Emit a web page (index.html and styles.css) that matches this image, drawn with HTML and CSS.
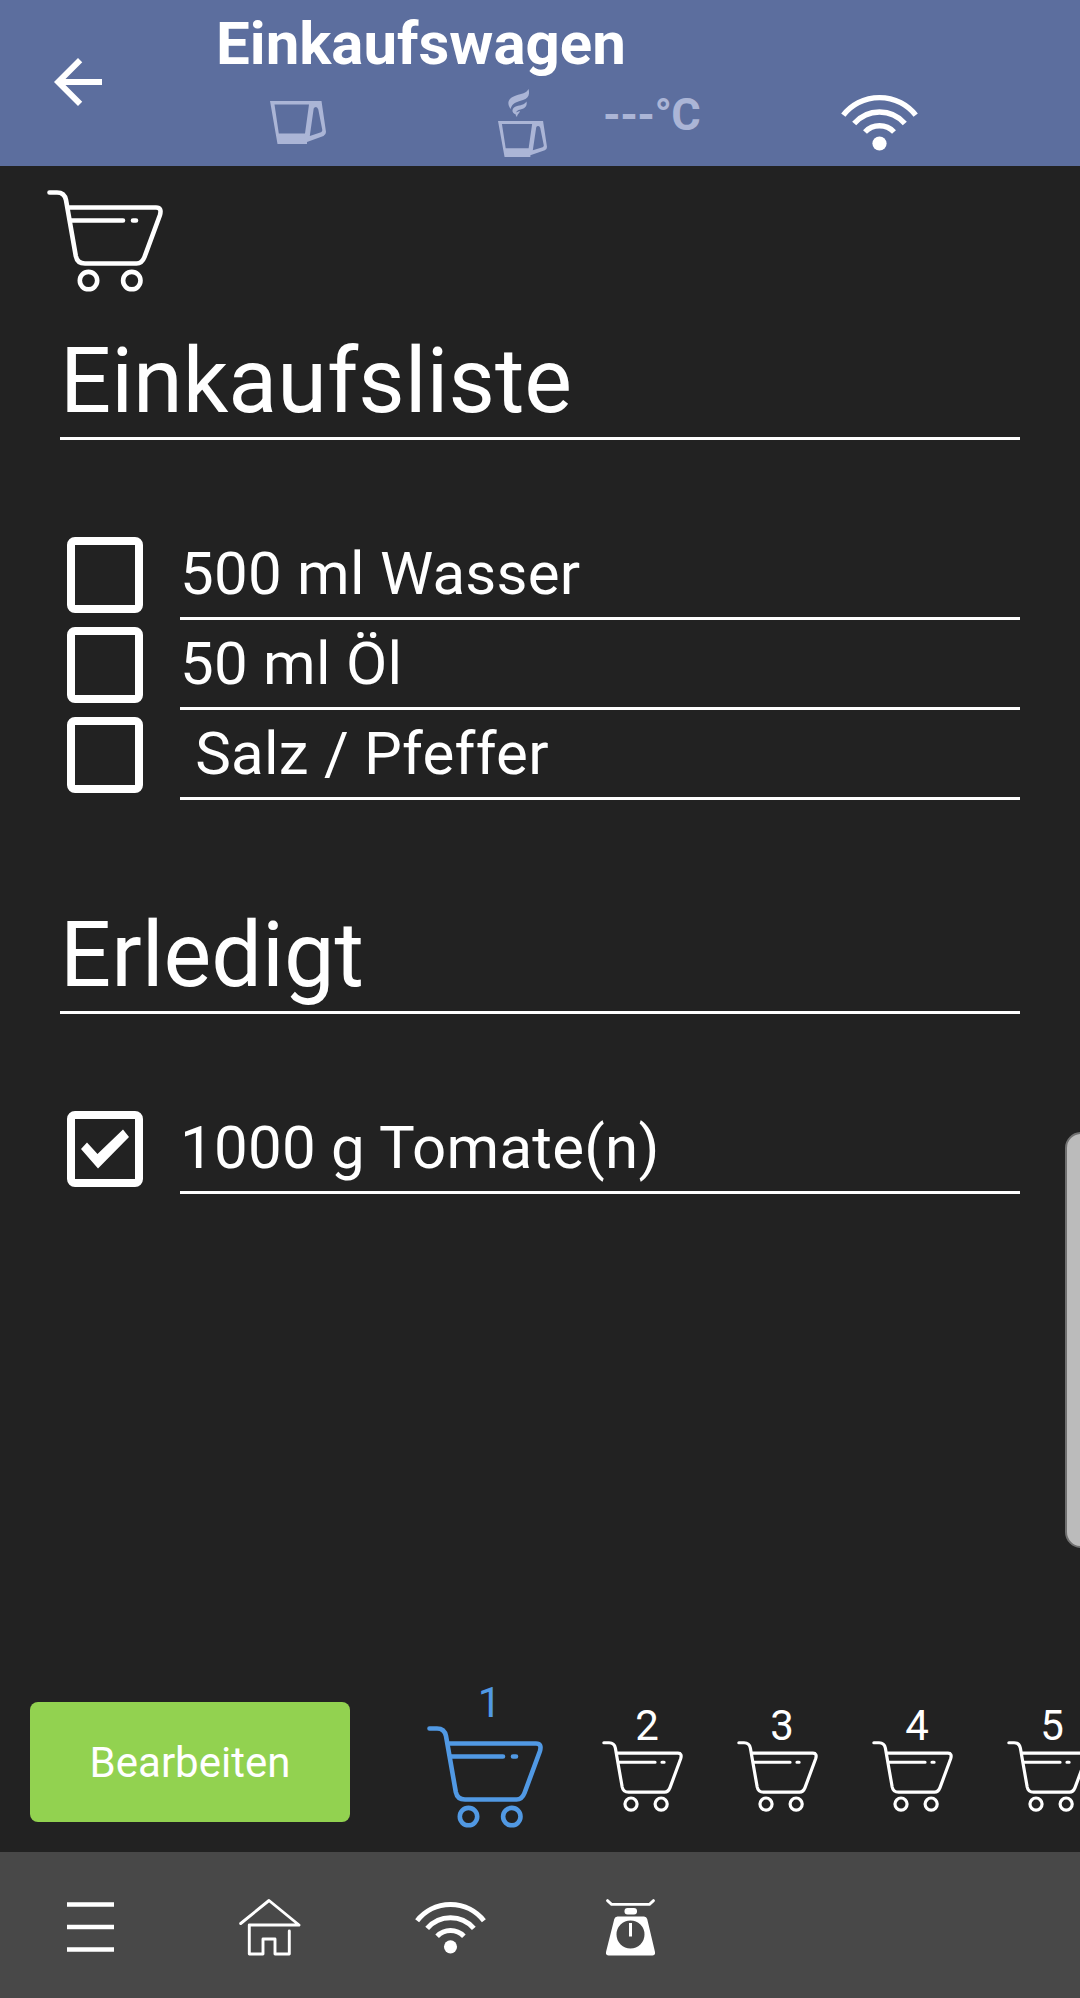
FILE: index.html
```html
<!DOCTYPE html>
<html lang="de">
<head>
  <meta charset="UTF-8" />
  <meta name="viewport" content="width=device-width, initial-scale=1.0"/>
  <title>Einkaufswagen</title>
  <link rel="stylesheet" href="styles.css">
</head>
<body>
  <!-- shared icons -->
  <svg class="sprite" aria-hidden="true">
    <symbol id="cart" viewBox="0 0 116 102">
      <g fill="none" stroke="currentColor" stroke-width="4.6" stroke-linecap="round" stroke-linejoin="round">
        <path d="M2.5 2.5H10Q17.500 2.500 19 10L28.800 66Q30.300 73.500 38 73.500H89.500Q95 73.500 97.500 67L112.800 25.500Q115.300 17.500 109 17.500H21"/>
        <path d="M24 30.500H76M86 30.500H89"/>
        <circle cx="41.500" cy="90.600" r="8.700"/>
        <circle cx="84.800" cy="90.600" r="8.700"/>
      </g>
    </symbol>
    <symbol id="wifi" viewBox="0 0 77 57">
      <g fill="none" stroke="currentColor" stroke-width="5.400">
        <path d="M2.300 21.200A46 46 0 0 1 74.700 21.200"/>
        <path d="M13.200 29.500A33.500 33.500 0 0 1 63.800 29.500"/>
        <path d="M24 38A20 20 0 0 1 53 38"/>
      </g>
      <circle cx="38.500" cy="49.500" r="7.100" fill="currentColor"/>
    </symbol>
    <symbol id="cup" viewBox="0 0 56 43" preserveAspectRatio="none">
      <path fill="currentColor" fill-rule="evenodd" d="M0 0H51.500L56 31Q56 33.500 53.500 35L37 41V43H7.500ZM4.500 3.500L8.800 32.600H35L39 3.500ZM43.700 7.500L39.800 35L51 31.300Q52.500 30.500 52.300 29L48.300 8.500Q47.500 6 46 6Q44.200 6 43.700 7.500Z"/>
    </symbol>
  </svg>

  <header class="topbar">
    <button class="back" aria-label="Zurück">
      <svg viewBox="0 0 24 24"><path fill="currentColor" d="M20 11H7.830l5.590-5.590L12 4l-8 8 8 8 1.410-1.410L7.830 13H20v-2z"/></svg>
    </button>
    <div class="topbar-main">
      <h1>Einkaufswagen</h1>
      <div class="status">
        <svg class="cup"><use href="#cup"/></svg>
        <div class="hot-cup">
          <svg class="steam" viewBox="0 0 21 28">
            <path fill="currentColor" d="M20.500 0C22 5 20.500 9.500 15 11C8 13 4.500 14 2.500 20C-1.500 14 0 9 8 6.500C14 4.500 18 4.500 20.500 0Z"/>
            <path fill="currentColor" d="M18.500 12.500C19.500 17 17 19.500 12.500 20.500C9.500 21.200 8 22 8 25.500C3 24 3 18.500 10 16.800C14 15.800 16.500 15.500 18.500 12.500ZM12 22C11.500 24.500 9.500 24.500 9 28C6.500 25 7 23 12 22Z"/>
          </svg>
          <svg class="cup small"><use href="#cup"/></svg>
        </div>
        <span class="temp">---°C</span>
        <svg class="wifi"><use href="#wifi"/></svg>
      </div>
    </div>
  </header>

  <main>
    <svg class="cart list-icon"><use href="#cart"/></svg>

    <h2>Einkaufsliste</h2>
    <ul class="items">
      <li><span class="box"></span><span class="label">500 ml Wasser</span></li>
      <li><span class="box"></span><span class="label">50 ml Öl</span></li>
      <li><span class="box"></span><span class="label">&nbsp;Salz / Pfeffer</span></li>
    </ul>

    <h2>Erledigt</h2>
    <ul class="items">
      <li>
        <span class="box"><svg viewBox="0 0 76 76"><path fill="currentColor" d="M14 38L20 31.500L30.500 43L56 18.500L62 26L31 57.500Z"/></svg></span>
        <span class="label">1000 g Tomate(n)</span>
      </li>
    </ul>
  </main>

  <div class="scroll-handle"></div>

  <section class="carts">
    <button class="edit">Bearbeiten</button>
    <div class="cart-tabs">
      <div class="tab active"><span>1</span><svg class="cart"><use href="#cart"/></svg></div>
      <div class="tab"><span>2</span><svg class="cart"><use href="#cart"/></svg></div>
      <div class="tab"><span>3</span><svg class="cart"><use href="#cart"/></svg></div>
      <div class="tab"><span>4</span><svg class="cart"><use href="#cart"/></svg></div>
      <div class="tab"><span>5</span><svg class="cart"><use href="#cart"/></svg></div>
    </div>
  </section>

  <nav class="bottombar">
    <svg class="menu-icon" viewBox="0 0 47 50"><path stroke="currentColor" stroke-width="4.600" d="M0 2.500H47M0 25H47M0 47.500H47"/></svg>
    <svg class="home-icon" viewBox="0 0 62 57"><path fill="none" stroke="currentColor" stroke-width="2.900" stroke-linecap="round" stroke-linejoin="round" d="M1.700 24.500L30 1.500L60 26H10.300V55H24V40H36V55H50.300V32"/></svg>
    <svg class="wifi"><use href="#wifi"/></svg>
    <svg class="scale-icon" viewBox="0 0 49 57">
      <path fill="none" stroke="currentColor" stroke-width="2.800" stroke-linecap="round" d="M1.500 1.600L5.500 5.300H43.500L47.500 1.600"/>
      <rect x="18.500" y="9" width="12.500" height="6.500" rx="3" fill="currentColor"/>
      <path fill="currentColor" fill-rule="evenodd" d="M11.500 17.500H38Q40.500 17.500 41.200 20L49 53Q49.500 56.500 46.500 56.500H2.500Q-.5 56.500 0 53L8.300 20Q9 17.500 11.500 17.500ZM24.500 21.500A14 14 0 1 0 24.500 49.500A14 14 0 1 0 24.500 21.500Z"/>
      <path stroke="currentColor" stroke-width="3" d="M24.500 24V37.500"/>
    </svg>
  </nav>
</body>
</html>
```

FILE: styles.css
```css
* {
  box-sizing: border-box;
}

body {
  margin: 0;
  height: 1998px;
  display: flex;
  flex-direction: column;
  position: relative;
  overflow: hidden;
  background: #222222;
  color: #fff;
  font-family: Roboto, sans-serif;
}

h1, h2, ul {
  margin: 0;
  padding: 0;
  font-weight: 400;
}

svg {
  display: block;
  flex: none;
}

button {
  border: none;
  padding: 0;
  color: #fff;
  font-family: inherit;
  cursor: pointer;
}

.sprite {
  display: none;
}

/* top bar */
.topbar {
  display: flex;
  height: 166px;
  background: #5c6e9e;
}

.back {
  width: 216px;
  padding: 0 0 2px 42px;
  background: none;
}

.back svg {
  width: 72px;
  height: 72px;
}

.topbar-main {
  flex: 1;
}

.topbar h1 {
  padding-bottom: 2px;
  font-size: 60px;
  font-weight: 700;
  line-height: 87px;
}

.status {
  display: flex;
  align-items: flex-start;
  color: #abb5d6;
}

.cup {
  width: 56px;
  height: 43px;
  margin: 12px 0 0 54px;
}

.hot-cup {
  margin-left: 172px;
}

.steam {
  width: 21px;
  height: 28px;
  margin-left: 10px;
}

.cup.small {
  width: 49px;
  height: 36px;
  margin: 4px 0 0;
}

.temp {
  width: 238px;
  margin-left: 56px;
  font-size: 45px;
  font-weight: 700;
  letter-spacing: -0.6px;
  line-height: 51px;
}

.wifi {
  width: 77px;
  height: 57px;
  color: #fff;
}

.status .wifi {
  margin-top: 5px;
}

/* list */
main {
  flex: 1;
  padding: 0 60px;
}

.cart {
  width: 116px;
  height: 102px;
}

.list-icon {
  margin: 24px 0 33px -13px;
}

h2 {
  padding-top: 2px;
  font-size: 90px;
  line-height: 110px;
  border-bottom: 3px solid #fff;
}

.items {
  list-style: none;
  padding: 90px 0 99px;
}

.items li {
  display: flex;
  align-items: center;
  height: 90px;
}

.box {
  width: 76px;
  height: 76px;
  margin: 0 37px 0 7px;
  border: 8px solid #fff;
  border-radius: 8px;
}

.box svg {
  width: 76px;
  height: 76px;
  margin: -8px;
}

.label {
  flex: 1;
  font-size: 60px;
  letter-spacing: 0.25px;
  line-height: 87px;
  border-bottom: 3px solid #fff;
}

.scroll-handle {
  position: absolute;
  top: 1132px;
  right: -17px;
  width: 32px;
  height: 416px;
  background: #bbb;
  border: 2px solid #707070;
  border-radius: 17px;
}

/* cart picker */
.carts {
  display: flex;
  align-items: flex-start;
  height: 172px;
  padding-left: 30px;
}

.edit {
  flex: none;
  width: 320px;
  height: 120px;
  margin-top: 22px;
  background: #92d250;
  border-radius: 8px;
  font-size: 42px;
}

.cart-tabs {
  display: flex;
  gap: 54px;
  margin-left: 77px;
}

.tab {
  padding-top: 23px;
  text-align: center;
  font-size: 42px;
  line-height: 46px;
}

.tab span {
  display: block;
  padding-left: 9px;
}

.tab .cart {
  width: 81px;
  height: 71px;
  margin-top: -8px;
}

.tab.active {
  padding-top: 0;
  margin-right: 5px;
  color: #5199e4;
}

.tab.active .cart {
  width: 116px;
  height: 102px;
  margin-top: 0;
}

/* bottom bar */
.bottombar {
  display: flex;
  align-items: center;
  height: 146px;
  padding: 4px 67px 0;
  background: #484848;
}

.menu-icon {
  width: 47px;
  height: 50px;
}

.home-icon {
  width: 62px;
  height: 57px;
  margin-left: 125px;
}

.bottombar .wifi {
  width: 71px;
  height: 53px;
  margin-left: 114px;
}

.scale-icon {
  width: 49px;
  height: 57px;
  margin-left: 120px;
}
```
